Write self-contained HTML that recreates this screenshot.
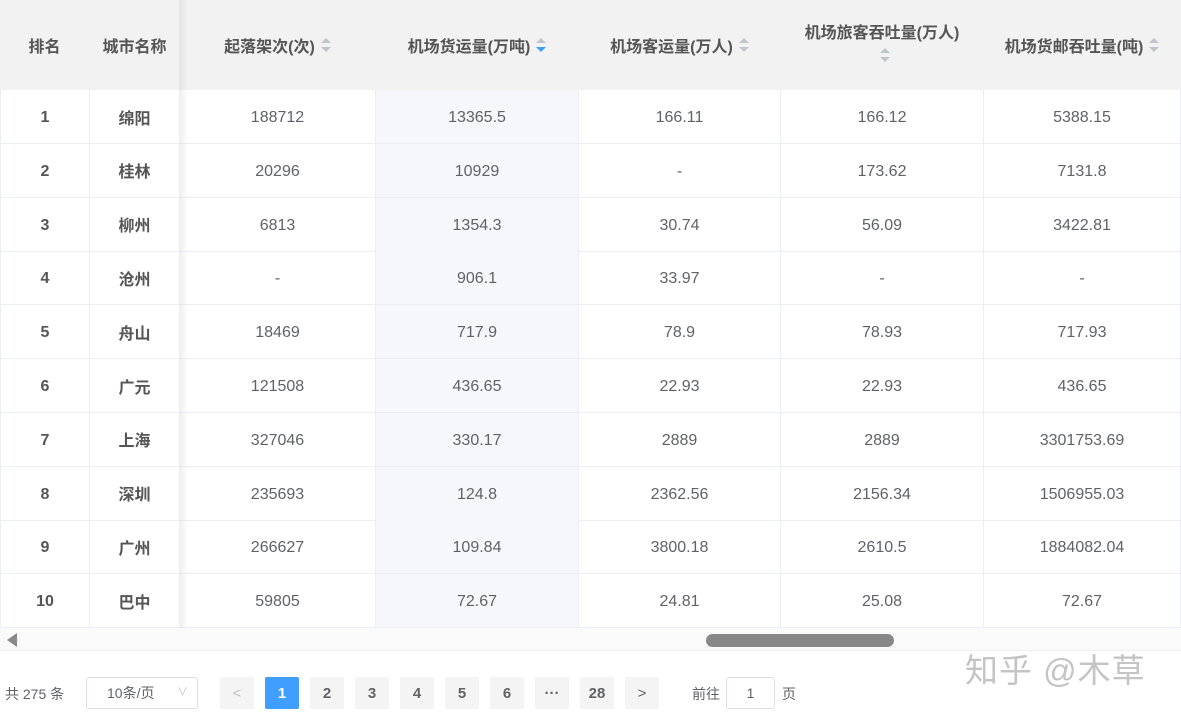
<!DOCTYPE html>
<html><head><meta charset="utf-8"><style>
*{margin:0;padding:0;box-sizing:border-box}
body{width:1181px;height:714px;overflow:hidden;background:#fff;font-family:"Liberation Sans","Noto Sans CJK SC",sans-serif;color:#606266;font-size:16px;position:relative}
.c{position:absolute;display:flex;align-items:center;justify-content:center;border-right:1px solid #ebeef5;border-bottom:1px solid #ebeef5;padding-top:3px}
.h{background:#f2f2f2;font-weight:bold;color:#555;font-size:16px;border-color:#f2f2f2;padding-top:0}
.b{font-weight:bold;color:#555}
.sort{display:inline-block;width:10px;height:16px;margin-left:6px;position:relative;vertical-align:middle}
.sort:before,.sort:after{content:"";position:absolute;left:0;border-left:5px solid transparent;border-right:5px solid transparent}
.sort:before{top:1px;border-bottom:5px solid #c0c4cc}
.sort:after{bottom:1px;border-top:5px solid #c0c4cc}
.sort.dn:after{border-top-color:#409eff}
.pg{position:absolute;top:677px;width:34px;height:32px;background:#f4f4f5;display:flex;align-items:center;justify-content:center;font-weight:bold;font-size:15px;color:#606266;border-radius:2px}
</style></head><body>
<div id="t"></div>
<div style="position:absolute;left:0;top:628px;width:1181px;height:23px;background:#fafafa;border-bottom:1px solid #ebeef5"></div>
<div style="position:absolute;left:7px;top:633px;width:0;height:0;border-top:7px solid transparent;border-bottom:7px solid transparent;border-right:10px solid #888"></div>
<div style="position:absolute;left:706px;top:634px;width:188px;height:13px;background:#888;border-radius:7px"></div>
<div style="position:absolute;left:5px;top:684px;font-size:14px">共 275 条</div>
<div style="position:absolute;left:86px;top:677px;width:112px;height:32px;border:1px solid #dcdfe6;border-radius:3px;font-size:14px;padding-left:20px;line-height:30px">10条/页<span style="position:absolute;right:9px;top:-1px;color:#c0c4cc;font-size:11px">∨</span></div>
<div class="pg" style="left:220px;color:#c0c4cc;font-weight:normal">&lt;</div>
<div class="pg" style="left:265px;background:#409eff;color:#fff">1</div>
<div class="pg" style="left:310px">2</div>
<div class="pg" style="left:355px">3</div>
<div class="pg" style="left:400px">4</div>
<div class="pg" style="left:445px">5</div>
<div class="pg" style="left:490px">6</div>
<div class="pg" style="left:535px">···</div>
<div class="pg" style="left:580px">28</div>
<div class="pg" style="left:625px;font-weight:normal">&gt;</div>
<div style="position:absolute;left:692px;top:684px;font-size:14px">前往</div>
<div style="position:absolute;left:726px;top:677px;width:49px;height:32px;border:1px solid #dcdfe6;border-radius:3px;text-align:center;line-height:30px;font-size:14px">1</div>
<div style="position:absolute;left:782px;top:684px;font-size:14px">页</div>
<div style="position:absolute;left:965px;top:644px;font-size:33px;color:#c4c4c4;letter-spacing:1px">知乎 @木草</div>
<script>
var cols=[0,90,180,376,579,781,984,1181];
var hd=['排名','城市名称','起落架次(次)','机场货运量(万吨)','机场客运量(万人)','机场旅客吞吐量(万人)','机场货邮吞吐量(吨)'];
var rows=[
['1','绵阳','188712','13365.5','166.11','166.12','5388.15'],
['2','桂林','20296','10929','-','173.62','7131.8'],
['3','柳州','6813','1354.3','30.74','56.09','3422.81'],
['4','沧州','-','906.1','33.97','-','-'],
['5','舟山','18469','717.9','78.9','78.93','717.93'],
['6','广元','121508','436.65','22.93','22.93','436.65'],
['7','上海','327046','330.17','2889','2889','3301753.69'],
['8','深圳','235693','124.8','2362.56','2156.34','1506955.03'],
['9','广州','266627','109.84','3800.18','2610.5','1884082.04'],
['10','巴中','59805','72.67','24.81','25.08','72.67']];
var h='';
for(var i=0;i<7;i++){
 var s=i<2?'':(i==5?'<div style="text-align:center;line-height:22px">'+hd[i]+'<br><span class="sort"></span></div>':hd[i]+'<span class="sort'+(i==3?' dn':'')+'"></span>');
 if(i<2)s=hd[i];
 h+='<div class="c h" style="left:'+cols[i]+'px;top:0;width:'+(cols[i+1]-cols[i])+'px;height:90px;'+(i==1?'border-right-color:#e4e4e4;':'')+'">'+s+'</div>';
}
for(var r=0;r<10;r++)for(var i=0;i<7;i++){
 var y=90+r*53.8;
 var pt=(i==1)?'padding-top:0;':'';
 h+='<div class="c'+(i<2?' b':'')+'" style="left:'+cols[i]+'px;top:'+y+'px;width:'+(cols[i+1]-cols[i])+'px;height:54px;'+pt+(i==3?'background:#f5f7fa;':'')+(i==0?'border-left:1px solid #ebeef5;':'')+'">'+rows[r][i]+'</div>';
}
h+='<div style="position:absolute;left:180px;top:0;width:8px;height:628px;background:linear-gradient(to right,rgba(0,0,0,.06),rgba(0,0,0,0))"></div>';
h+='<div style="position:absolute;left:0;top:628px;width:180px;height:6px;background:linear-gradient(rgba(0,0,0,.05),rgba(0,0,0,0))"></div>';
document.getElementById('t').innerHTML=h;
</script>
</body></html>
